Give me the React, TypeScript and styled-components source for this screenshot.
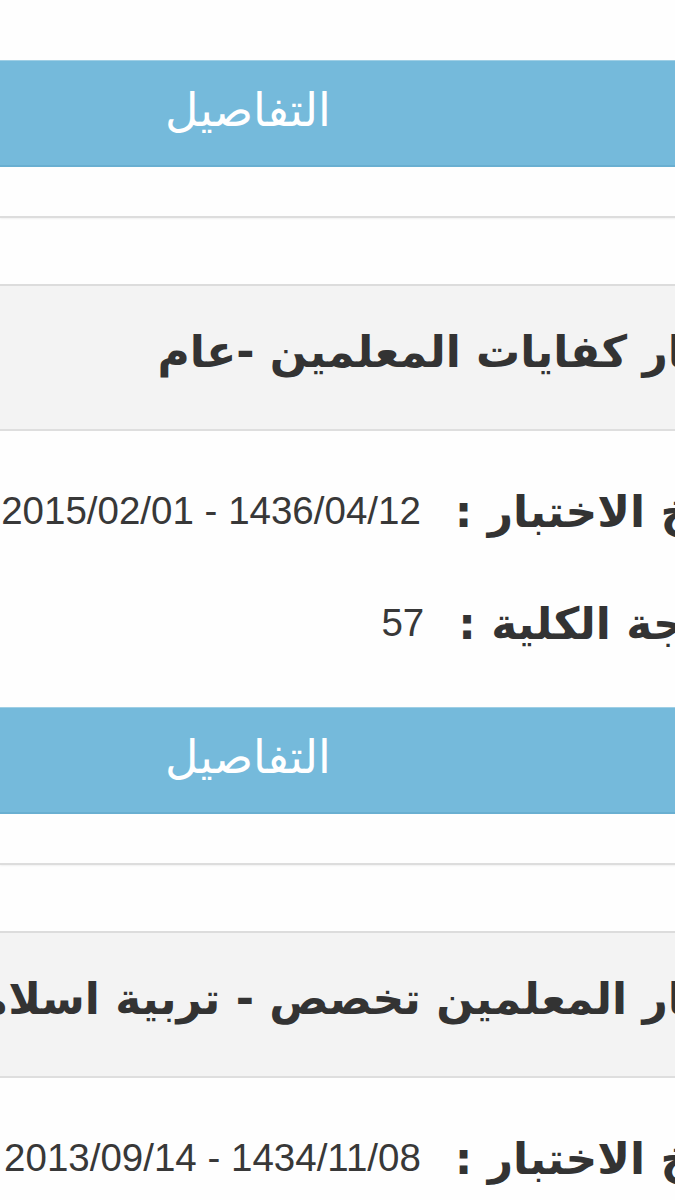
import React from 'react';
import styled, { createGlobalStyle } from 'styled-components';

type ExamResult = {
  title: string;
  date: string;
  score: string;
};

const results: ExamResult[] = [
  { title: 'اختبار كفايات المعلمين -تخصص', date: '1436/10/20 - 2015/08/05', score: '64' },
  { title: 'اختبار كفايات المعلمين -عام', date: '1436/04/12 - 2015/02/01', score: '57' },
  { title: 'اختبار المعلمين تخصص - تربية اسلامية', date: '1434/11/08 - 2013/09/14', score: '61' },
];

const App = () => {
  return (
    <>
      <GlobalStyle />
      <Screen>
        <ResultList>
          {results.map((item, i) => (
            <ResultCard key={i}>
              <TitleBox>
                <TitleText>{item.title}</TitleText>
              </TitleBox>
              <InfoList>
                <InfoRow>
                  <InfoLabel>تاريخ الاختبار :</InfoLabel>
                  <InfoValue>{item.date}</InfoValue>
                </InfoRow>
                <InfoRow>
                  <InfoLabel>الدرجة الكلية :</InfoLabel>
                  <InfoValue>{item.score}</InfoValue>
                </InfoRow>
              </InfoList>
              <DetailsButton>التفاصيل</DetailsButton>
              <Divider />
            </ResultCard>
          ))}
        </ResultList>
      </Screen>
    </>
  );
};

export default App;

const GlobalStyle = createGlobalStyle`
  html, body {
    margin: 0;
    padding: 0;
    background: #fefefe;
    overflow: hidden;
  }
`;

const Screen = styled.div`
  width: 675px;
  height: 1200px;
  overflow: hidden;
  background: #fefefe;
`;

// the list is wider than the screen and scrolled a little way down
const ResultList = styled.div`
  width: 787px;
  margin-top: -363px;
  direction: rtl;
  font-family: 'DejaVu Sans', 'Noto Sans', sans-serif;
  color: #333333;
`;

const ResultCard = styled.section`
  display: flex;
  flex-direction: column;
`;

const TitleBox = styled.div`
  height: 147px;
  box-sizing: border-box;
  display: flex;
  align-items: center;
  padding: 0 20px 12px 0;
  background: #f3f3f3;
  border-top: 2px solid #dcdcdc;
  border-bottom: 2px solid #dedede;
`;

const TitleText = styled.h2`
  margin: 0;
  font-size: 44px;
  font-weight: 700;
  white-space: nowrap;
`;

const InfoList = styled.div`
  display: flex;
  flex-direction: column;
  padding: 24px 20px 28px 0;
`;

const InfoRow = styled.div`
  height: 112px;
  display: flex;
  align-items: center;
  gap: 34px;
  white-space: nowrap;
`;

const InfoLabel = styled.span`
  font-size: 44px;
  font-weight: 700;
`;

const InfoValue = styled.span`
  font-family: 'Liberation Sans', Arial, sans-serif;
  font-size: 38.5px;
  color: #383838;
`;

const DetailsButton = styled.button`
  height: 107px;
  display: flex;
  align-items: center;
  justify-content: flex-end;
  padding: 0 0 6px 165px;
  background: #75badb;
  border: none;
  border-top: 1px solid #9fcfe5;
  border-bottom: 2px solid #69afd1;
  color: #ffffff;
  font-family: 'DejaVu Sans', sans-serif;
  font-size: 46px;
  font-weight: 200;
  direction: rtl;
  cursor: pointer;
`;

const Divider = styled.div`
  height: 2px;
  margin: 49px 0 66px;
  background: #dddddd;
  box-shadow: 0 1px 2px rgba(0, 0, 0, 0.06);
`;
